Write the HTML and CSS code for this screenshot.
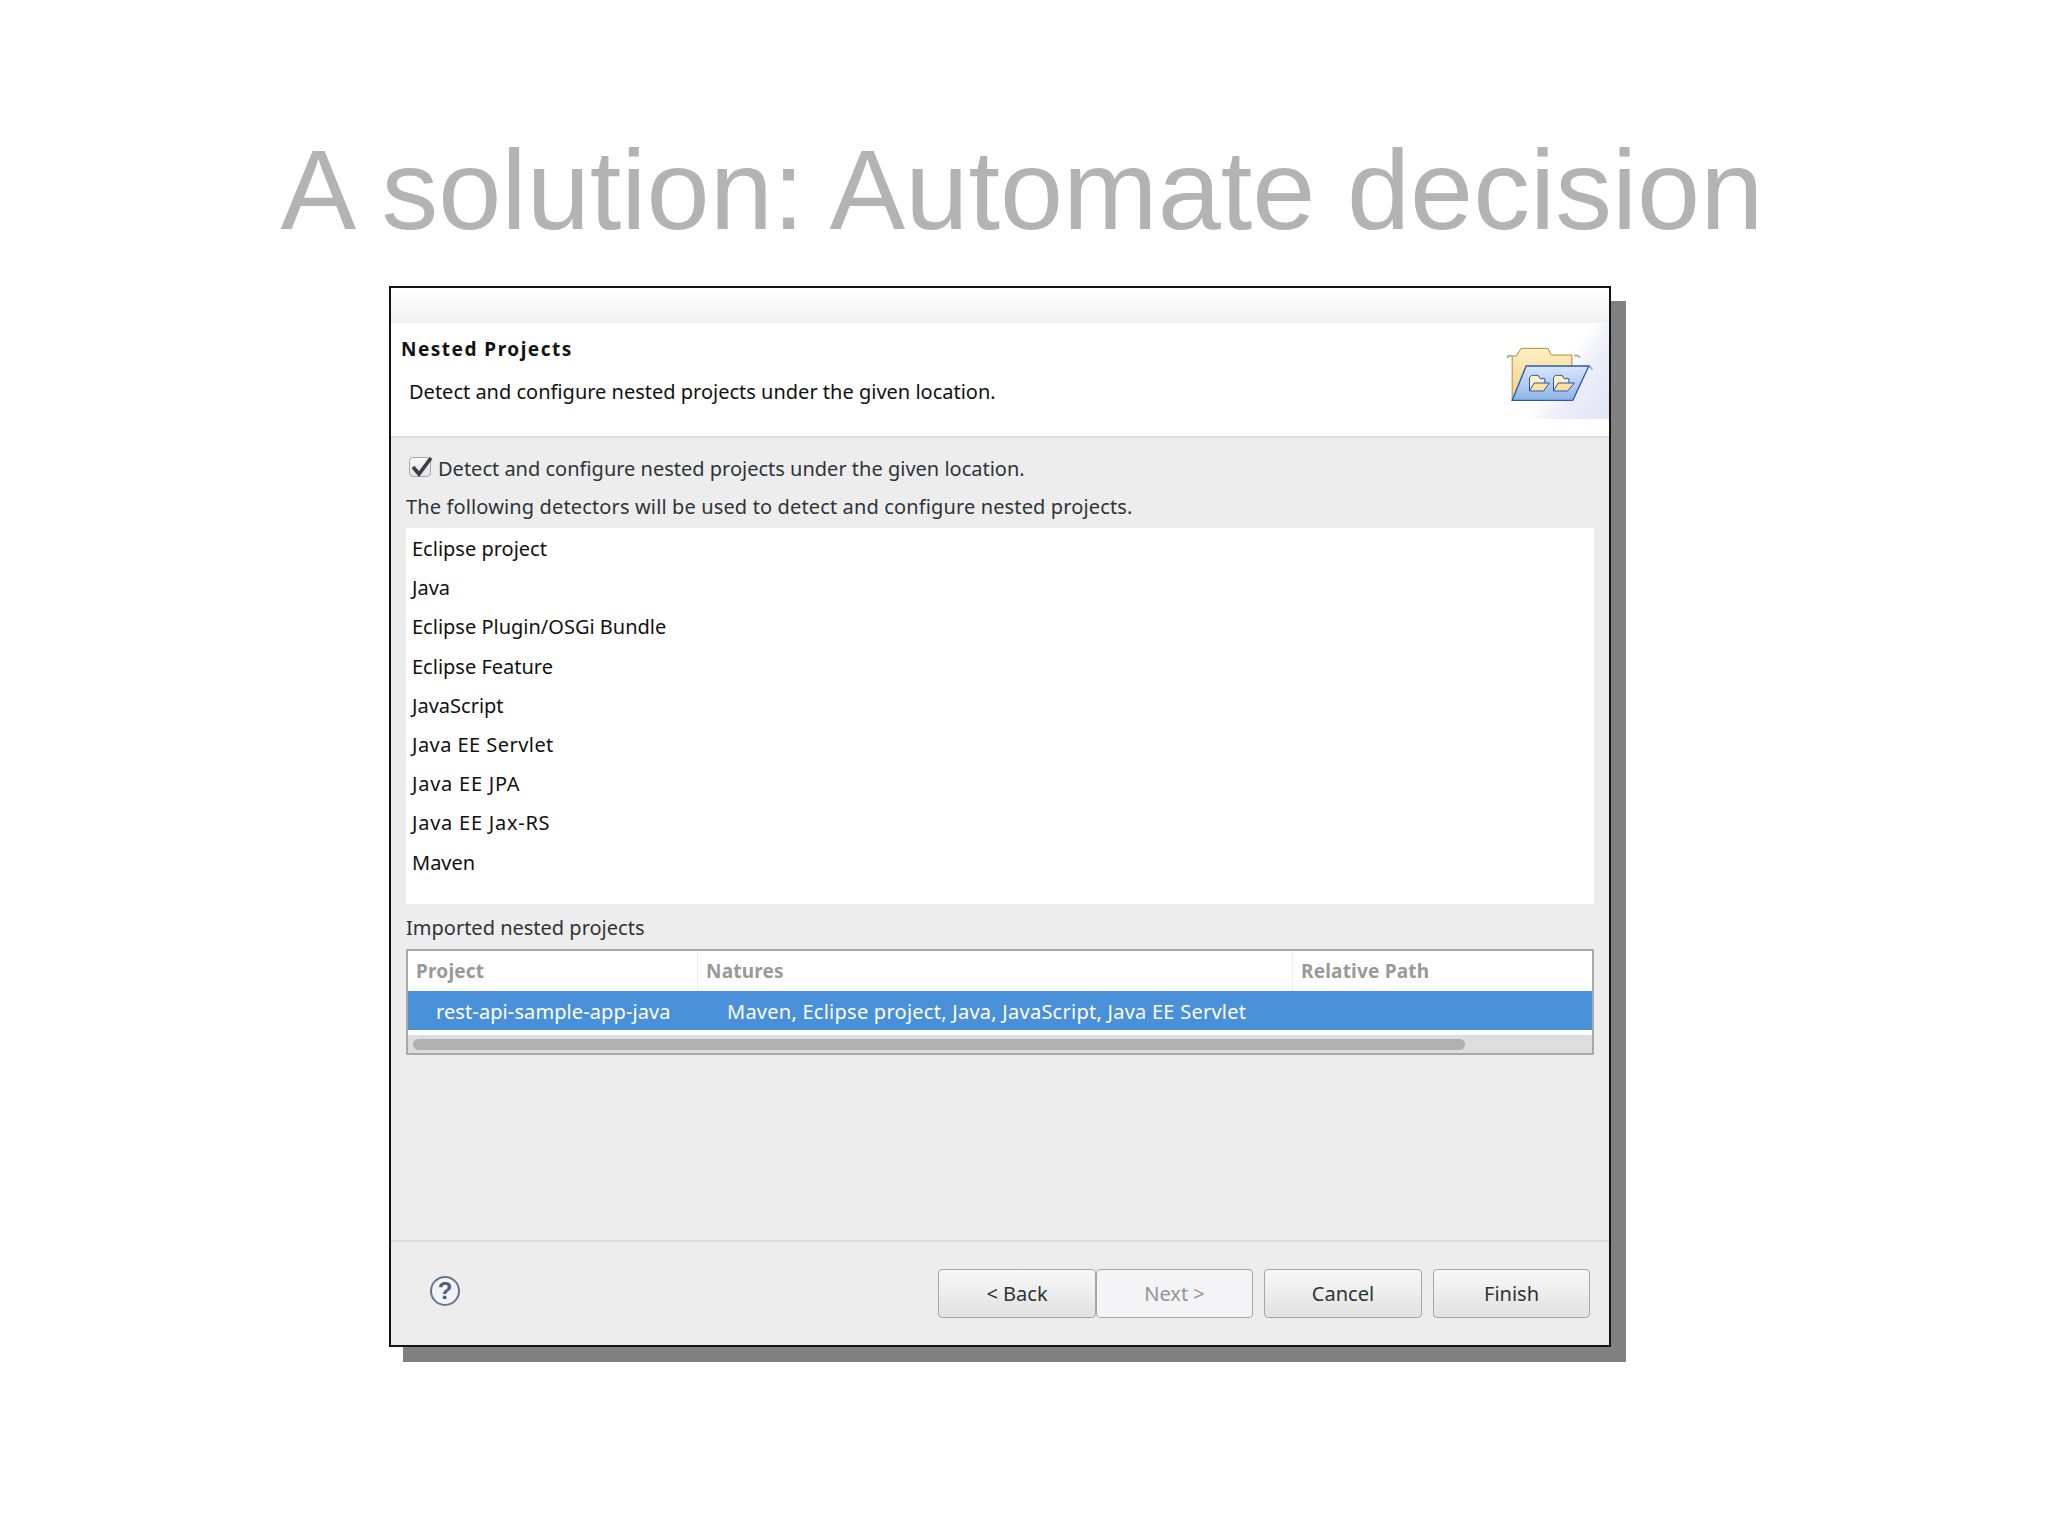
FILE: index.html
```html
<!DOCTYPE html>
<html lang="en">
<head>
    <meta charset="UTF-8">
    <title>A solution: Automate decision</title>
    <link rel="stylesheet" href="styles.css">
</head>
<body>
    <h1 class="slide-title">A solution: Automate decision</h1>

    <div class="dialog">
        <div class="top-bar"></div>

        <div class="banner">
            <div class="banner-text">
                <h2>Nested Projects</h2>
                <p>Detect and configure nested projects under the given location.</p>
            </div>
            <div class="banner-icon">
                <svg width="87" height="55" viewBox="0 0 260 165">
                    <defs>
                        <linearGradient id="backFolder" x1="0" y1="0" x2="0" y2="1">
                            <stop offset="0" stop-color="#fdf0c4"/>
                            <stop offset="1" stop-color="#f0cf85"/>
                        </linearGradient>
                        <linearGradient id="frontFolder" x1="0" y1="0" x2="0" y2="1">
                            <stop offset="0" stop-color="#d9e7f9"/>
                            <stop offset="1" stop-color="#8db6e8"/>
                        </linearGradient>
                    </defs>
                    <path d="M2 32q6 -9 16 -5M204 27q10 -6 18 5M246 62q6 -8 12 6" fill="none" stroke="#a3a8b2" stroke-width="5"/>
                    <path d="M18 160V27H30L45 4H125L135 24H197V70H60Z" fill="url(#backFolder)" stroke="#b08a3c" stroke-width="3"/>
                    <path d="M60 57H248L200 160H18Z" fill="url(#frontFolder)" stroke="#2f55b8" stroke-width="4"/>
                    <path d="M70 132V92L76 85H96L102 95H116V108" fill="#fdf0c4" stroke="#2f55b8" stroke-width="3"/>
                    <path d="M70 132L84 108H130L112 132Z" fill="#fbdf9c" stroke="#2f55b8" stroke-width="3"/>
                    <path d="M142 132V92L148 85H168L174 95H188V108" fill="#fdf0c4" stroke="#2f55b8" stroke-width="3"/>
                    <path d="M142 132L156 108H205L184 132Z" fill="#fbdf9c" stroke="#2f55b8" stroke-width="3"/>
                </svg>
            </div>
        </div>

        <div class="body">
            <label class="check-row">
                <span class="checkbox">
                    <svg width="24" height="20" viewBox="0 0 24 20"><path d="M4 10l6 7L22 1" fill="none" stroke="#3a3f41" stroke-width="3.6"/></svg>
                </span>
                Detect and configure nested projects under the given location.
            </label>
            <div class="intro">The following detectors will be used to detect and configure nested projects.</div>

            <ul class="detectors">
                <li>Eclipse project</li>
                <li>Java</li>
                <li>Eclipse Plugin/OSGi Bundle</li>
                <li>Eclipse Feature</li>
                <li>JavaScript</li>
                <li class="spaced">Java EE Servlet</li>
                <li class="spaced-more">Java EE JPA</li>
                <li class="spaced-more">Java EE Jax-RS</li>
                <li>Maven</li>
            </ul>

            <div class="section-label">Imported nested projects</div>

            <div class="table">
                <div class="table-head">
                    <div class="col-project">Project</div>
                    <div class="col-natures">Natures</div>
                    <div class="col-path">Relative Path</div>
                </div>
                <div class="table-row">
                    <div class="col-project">rest-api-sample-app-java</div>
                    <div class="col-natures">Maven, Eclipse project, Java, JavaScript, Java EE Servlet</div>
                </div>
                <div class="table-gap"></div>
                <div class="scroll-track"><div class="scroll-thumb"></div></div>
            </div>
        </div>

        <div class="footer">
            <span class="help">?</span>
            <div class="buttons">
                <div class="button-pair">
                    <button>&lt; Back</button>
                    <button disabled>Next &gt;</button>
                </div>
                <button>Cancel</button>
                <button>Finish</button>
            </div>
        </div>
    </div>
</body>
</html>
```

FILE: styles.css
```css
* {
    margin: 0;
    padding: 0;
    box-sizing: border-box;
}

body {
    background: #ffffff;
    height: 1535px;
    overflow: hidden;
    font-family: "Noto Sans", sans-serif;
    font-size: 20px;
    color: #2e3436;
}

.slide-title {
    font-family: "Liberation Sans", sans-serif;
    font-size: 113.5px;
    font-weight: 400;
    line-height: 130px;
    color: #b3b3b3;
    text-align: center;
    padding: 125px 4px 0 0;
    height: 286px;
    white-space: nowrap;
}

.dialog {
    width: 1222px;
    height: 1061px;
    margin-left: 389px;
    border: 2px solid #141414;
    background: #ededee;
    box-shadow: 14px 15px 0 #808080, 15px 15px 0 #808080;
    display: flex;
    flex-direction: column;
}

.top-bar {
    height: 35px;
    background: linear-gradient(#ffffff, #f1f1f1);
}

.banner {
    height: 115px;
    background: #ffffff;
    border-bottom: 2px solid #dcdcdc;
    display: flex;
    justify-content: space-between;
}

.banner h2 {
    font-size: 19px;
    font-weight: 700;
    color: #111;
    margin: 13px 0 0 10px;
    line-height: 26px;
    letter-spacing: 1.5px;
}

.banner p {
    margin: 17px 0 0 18px;
    line-height: 26px;
    color: #111;
}

.banner-icon {
    width: 103px;
    height: 96px;
    padding-top: 24px;
    background: linear-gradient(125deg, #ffffff 50%, #ebedf9 70%, #e1e5f5 100%);
}

.body {
    flex: 1;
    padding: 17px 15px 0 15px;
}

.check-row {
    display: flex;
    align-items: center;
    gap: 7px;
    height: 27px;
    padding-left: 3px;
}

.checkbox {
    width: 22px;
    height: 20px;
    margin-top: -3px;
    border: 1px solid #a8a8a8;
    border-radius: 4px;
    background: linear-gradient(#fafafa, #e2e2e2);
    display: flex;
    align-items: flex-start;
}

.checkbox svg {
    flex: none;
    margin: -1px 0 0 -1px;
}

.intro {
    line-height: 26px;
    margin-top: 12px;
    letter-spacing: 0.135px;
}

.detectors {
    list-style: none;
    height: 376px;
    margin-top: 8px;
    padding: 1px 0 0 6px;
    background: #ffffff;
    color: #111;
}

.detectors li {
    height: 39.2px;
    line-height: 39.2px;
}

.detectors .spaced {
    letter-spacing: 0.45px;
}

.detectors .spaced-more {
    letter-spacing: 0.75px;
}

.section-label {
    line-height: 26px;
    margin-top: 11px;
}

.table {
    height: 106px;
    margin-top: 8px;
    border: 2px solid #a9a9a9;
    background: #ffffff;
}

.table-head,
.table-row {
    display: flex;
    height: 40px;
    align-items: center;
}

.table-head {
    color: #999999;
    font-weight: 700;
    font-size: 19px;
    letter-spacing: 0.2px;
}

.table-head div {
    height: 100%;
    line-height: 40px;
    padding-left: 8px;
    border-left: 1px solid #eeeeee;
}

.table-head .col-project {
    border-left: none;
}

.table-row {
    height: 39px;
    padding-top: 2px;
    background: #4a90d9;
    color: #ffffff;
}

.col-project {
    width: 289px;
}

.col-natures {
    width: 595px;
}

.table-row .col-project {
    padding-left: 28px;
    letter-spacing: 0.1px;
}

.table-row .col-natures {
    padding-left: 30px;
    white-space: nowrap;
    letter-spacing: 0.25px;
}

.table-gap {
    height: 5px;
}

.scroll-track {
    height: 18px;
    background: #dddddd;
    padding: 4px 0 0 5px;
}

.scroll-thumb {
    width: 1052px;
    height: 11px;
    border-radius: 6px;
    background: #b0b0b0;
}

.footer {
    height: 105px;
    border-top: 2px solid #dcdcdc;
    display: flex;
    justify-content: space-between;
    padding: 27px 19px 0 39px;
}

.help {
    width: 30px;
    height: 30px;
    margin-top: 7px;
    border: 2px solid #66768f;
    border-radius: 50%;
    background: #f2f2f7;
    color: #4d5f7c;
    font-family: "Liberation Sans", sans-serif;
    font-weight: 700;
    font-size: 24px;
    line-height: 26px;
    text-align: center;
}

.buttons {
    display: flex;
    gap: 11px;
}

.button-pair {
    display: flex;
}

button {
    width: 158px;
    height: 49px;
    border: 1px solid #a6a6a6;
    border-radius: 4px;
    background: linear-gradient(#f8f8f8, #e2e2e2);
    font-family: "Noto Sans", sans-serif;
    font-size: 20px;
    color: #2e3436;
}

button:last-child {
    width: 157px;
}

button:disabled {
    background: #f4f4f6;
    color: #929595;
}
```
